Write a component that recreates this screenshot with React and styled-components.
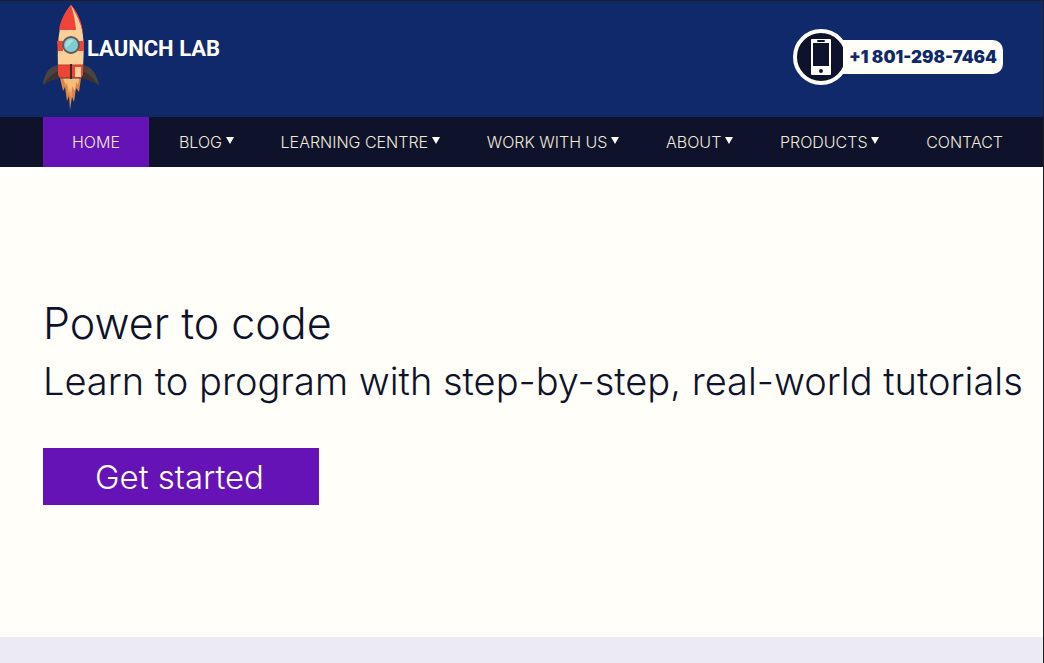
import React from "react";
import styled, { createGlobalStyle } from "styled-components";

const colors = {
  blue: "#10296b",
  ink: "#0e132b",
  purple: "#6512b6",
  cream: "#fffef9",
  lavender: "#eceaf5",
  edge: "#1f1f21",
};

const GlobalStyle = createGlobalStyle`
  * { box-sizing: border-box; }
  body {
    margin: 0;
    background: ${colors.lavender};
    font-family: Inter, "Open Sans", sans-serif;
    color: ${colors.ink};
  }
`;

const Page = styled.div`
  display: flex;
  flex-direction: column;
  min-height: 100vh;
  border-top: 1px solid ${colors.edge};
  border-right: 1px solid ${colors.edge};
`;

const Header = styled.header`
  display: flex;
  justify-content: space-between;
  align-items: flex-start;
  height: 116px;
  padding: 4px 40px 0 43px;
  background: ${colors.blue};
`;

const Brand = styled.a`
  display: flex;
  color: ${colors.cream};
  text-decoration: none;
`;

const BrandName = styled.span`
  margin-top: 24px;
  margin-left: -12px;
  font-family: Roboto, "Liberation Sans", sans-serif;
  font-weight: 700;
  font-size: 22px;
  line-height: 40px;
  white-space: nowrap;
`;

const Phone = styled.a`
  display: flex;
  align-items: center;
  margin-top: 24px;
  text-decoration: none;
`;

const PhoneBadge = styled.span`
  display: flex;
  align-items: center;
  justify-content: center;
  width: 56px;
  height: 56px;
  border: 4px solid ${colors.cream};
  border-radius: 50%;
  background: ${colors.ink};
`;

const PhoneNumber = styled.span`
  margin-left: -6px;
  padding: 0 6px;
  border-radius: 0 10px 10px 0;
  background: ${colors.cream};
  color: ${colors.blue};
  font-weight: 900;
  font-size: 17px;
  line-height: 34px;
  white-space: nowrap;
`;

const Nav = styled.nav`
  padding: 0 40px 0 43px;
  background: ${colors.ink};
`;

const NavList = styled.ul`
  display: flex;
  margin: 0;
  padding: 0;
  list-style: none;
`;

const NavItem = styled.li`
  &:first-child {
    margin-right: 30px;
  }
  & + & + & {
    margin-left: auto;
  }
`;

const NavLink = styled.a`
  display: flex;
  align-items: center;
  gap: 4px;
  height: 50px;
  padding: ${(p) => (p.$active ? "0 29px" : "0")};
  background: ${(p) => (p.$active ? colors.purple : "transparent")};
  color: #f3e9dc;
  font-weight: 300;
  font-size: 16px;
  line-height: 20px;
  text-decoration: none;
  white-space: nowrap;
`;

const Hero = styled.main`
  display: flex;
  flex-direction: column;
  align-items: flex-start;
  min-height: 470px;
  padding: 120px 16px 132px 43px;
  border-top: 8px solid #ffffff;
  background: ${colors.cream};
`;

const Title = styled.h1`
  margin: 0;
  font-weight: 300;
  font-size: 43px;
  line-height: 56px;
`;

const Subtitle = styled.p`
  margin: 4px 0 41px;
  font-weight: 300;
  font-size: 38px;
  line-height: 52px;
`;

const StartButton = styled.button`
  height: 57px;
  padding: 0 55px 0 52px;
  border: 0;
  background: ${colors.purple};
  color: ${colors.cream};
  font-family: inherit;
  font-weight: 300;
  font-size: 33px;
  line-height: 40px;
`;

const Rocket = () => (
  <svg width="56" height="106" viewBox="0 0 56 106" aria-hidden="true">
    <path d="M17 73L20 86L22 82L24 96L26 91L27 105L29 92L31 97L33 83L36 87L38 73Z" fill="#dd8644" />
    <path d="M20 73L23 81L24 77L26 90L27 83L28 94L29 81L32 86L33 77L35 80L36 73Z" fill="#f6bd7c" />
    <path d="M15 60C10 61 5 64 3 69C1 73 0 77 0 80C6 76 11 74 17 73Z" fill="#4b433f" />
    <path d="M40 60C45 61 50 64 52 69C54 73 56 77 56 80C49 76 44 74 38 73Z" fill="#4b433f" />
    <path d="M15 66C9 69 4 74 0 80C6 76 11 74 17 73Z" fill="#3a3331" />
    <path d="M40 66C46 69 51 74 56 80C49 76 44 74 38 73Z" fill="#3a3331" />
    <path d="M28 0C16 14 14 34 15 61H40C42 34 40 14 28 0Z" fill="#fdcf98" />
    <path d="M28 0C21 8 17 17 16 25H33C32 15 30 6 28 0Z" fill="#f04438" />
    <path d="M28 0C35 8 39 18 40 28C37 17 33 8 28 0Z" fill="#f04438" />
    <path d="M14 36H20V46H15ZM36 36H41V46H35Z" fill="#f04438" />
    <path d="M15 60H40V70L38 73H17L15 70Z" fill="#f04438" />
    <path d="M32 62H38V72H32Z" fill="#fdcf98" />
    <path d="M15 60H40" stroke="#b5402f" strokeWidth="1" />
    <path d="M17 73H38" stroke="#4b433f" strokeWidth="1" />
    <path d="M28 59V74" stroke="#332d2c" strokeWidth="2" />
    <circle cx="28" cy="40" r="8" fill="#82cbd3" stroke="#5f5b59" strokeWidth="2" />
    <path d="M23 43A6 6 0 0 1 31 35Z" fill="#a5dfe1" />
  </svg>
);

const Handset = () => (
  <svg width="20" height="36" viewBox="0 0 20 36" aria-hidden="true">
    <rect width="20" height="36" rx="1" fill={colors.cream} />
    <rect x="2" y="4" width="16" height="23" fill={colors.ink} />
    <rect x="6" y="1" width="8" height="2" rx="1" fill={colors.ink} />
    <circle cx="10" cy="32" r="2" fill={colors.ink} />
  </svg>
);

const Caret = () => (
  <svg width="8" height="12" viewBox="0 0 8 12" aria-hidden="true">
    <path d="M0 1H8L4 8Z" fill={colors.cream} />
  </svg>
);

const links = [
  { label: "HOME", active: true },
  { label: "BLOG", menu: true },
  { label: "LEARNING CENTRE", menu: true },
  { label: "WORK WITH US", menu: true },
  { label: "ABOUT", menu: true },
  { label: "PRODUCTS", menu: true },
  { label: "CONTACT" },
];

export default function App() {
  return (
    <Page>
      <GlobalStyle />
      <Header>
        <Brand href="#">
          <Rocket />
          <BrandName>LAUNCH LAB</BrandName>
        </Brand>
        <Phone href="tel:+18012987464">
          <PhoneBadge>
            <Handset />
          </PhoneBadge>
          <PhoneNumber>+1 801-298-7464</PhoneNumber>
        </Phone>
      </Header>
      <Nav>
        <NavList>
          {links.map(({ label, active, menu }) => (
            <NavItem key={label}>
              <NavLink href="#" $active={active}>
                {label}
                {menu && <Caret />}
              </NavLink>
            </NavItem>
          ))}
        </NavList>
      </Nav>
      <Hero>
        <Title>Power to code</Title>
        <Subtitle>Learn to program with step-by-step, real-world tutorials</Subtitle>
        <StartButton type="button">Get started</StartButton>
      </Hero>
    </Page>
  );
}
